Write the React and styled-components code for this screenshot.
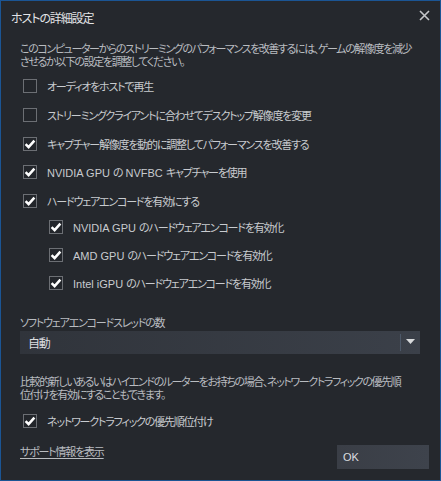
import React from "react";
import styled, { createGlobalStyle } from "styled-components";

const GlobalStyle = createGlobalStyle`
  html, body {
    margin: 0;
    padding: 0;
    background: #25282d;
  }
  * {
    box-sizing: border-box;
  }
`;

const font = `"Liberation Sans", "Noto Sans CJK JP", sans-serif`;

const Frame = styled.div`
  width: 441px;
  height: 481px;
  border: 1px solid #1b5594;
  background-color: #25282d;
  font-family: ${font};
  font-feature-settings: "palt";
  font-size: 11px;
  letter-spacing: -1.2px;
  color: #c3c6ca;
  display: flex;
  flex-direction: column;
  overflow: hidden;
`;

// ascii runs keep normal tracking, the kana/kanji get squeezed
const Latin = styled.span`
  letter-spacing: 0;
`;

const Jp = ({ children }) =>
  children
    .split(/([\x20-\x7e]+)/)
    .map((part, i) =>
      /^[\x20-\x7e]+$/.test(part) ? <Latin key={i}>{part}</Latin> : part
    );

const TitleBar = styled.div`
  height: 33px;
  display: flex;
  align-items: center;
  justify-content: space-between;
  padding: 0 9px 0 10px;
`;

const Title = styled.div`
  color: #e2e3e5;
  font-size: 12px;
  letter-spacing: -1.1px;
`;

const Close = styled.button`
  border: none;
  background: none;
  padding: 0;
  width: 14px;
  height: 14px;
  margin-top: -4px;
  display: flex;
  align-items: center;
  justify-content: center;
  cursor: pointer;
`;

const Body = styled.div`
  flex: 1;
  display: flex;
  flex-direction: column;
  padding: 9px 20px 0 19px;
`;

const Text = styled.p`
  margin: ${(p) => p.mt || "0"} 0 0 0;
  line-height: 13px;
  color: #b9bcc0;
  letter-spacing: -1.4px;
  white-space: nowrap;
`;

const Rows = styled.div`
  display: flex;
  flex-direction: column;
  margin-top: ${(p) => p.mt || "0"};
  padding-left: ${(p) => p.indent || "3px"};
`;

const Row = styled.label`
  height: ${(p) => p.h || "28.7px"};
  display: flex;
  align-items: center;
  gap: 10px;
  color: #c8cbcf;
  cursor: pointer;
`;

const Box = styled.span`
  width: 14px;
  height: 14px;
  flex: none;
  border: 1px solid #6c6f74;
  background-color: #23262b;
  display: flex;
  align-items: center;
  justify-content: center;
`;

const FieldLabel = styled.div`
  margin-top: 20px;
  line-height: 13px;
  color: #b9bcc0;
`;

const Select = styled.div`
  margin-top: 1px;
  height: 23px;
  display: flex;
  align-items: center;
  background: linear-gradient(90deg, #30343b 0%, #3b4049 100%);
  color: #dcdee0;
`;

const SelectValue = styled.div`
  flex: 1;
  padding-left: 8px;
  font-size: 12px;
`;

const Divider = styled.div`
  width: 1px;
  height: 17px;
  background-color: #4d5868;
`;

const Arrow = styled.div`
  width: 19px;
  display: flex;
  justify-content: center;
`;

const Footer = styled.div`
  margin-top: 9px;
  margin-right: -9px;
  display: flex;
  align-items: flex-start;
  justify-content: space-between;
`;

const Link = styled.a`
  margin-top: 1px;
  line-height: 13px;
  color: #b9bcc0;
  text-decoration: underline;
  text-underline-offset: 2px;
  cursor: pointer;
`;

const OkButton = styled.button`
  width: 92px;
  height: 24px;
  border: none;
  background: linear-gradient(90deg, #3a3e46 0%, #3e434c 100%);
  color: #dcdee0;
  font-family: ${font};
  font-size: 11px;
  text-align: left;
  padding: 0 6px;
  cursor: pointer;
`;

const Check = () => (
  <svg width="12" height="12" viewBox="0 0 12 12">
    <path
      d="M1.6 6.2 L4.6 9.2 L10.4 2.6"
      fill="none"
      stroke="#ffffff"
      strokeWidth="2.5"
    />
  </svg>
);

const Checkbox = ({ checked, label, h }) => (
  <Row h={h}>
    <Box>{checked && <Check />}</Box>
    <span>
      <Jp>{label}</Jp>
    </span>
  </Row>
);

export default function App() {
  return (
    <>
      <GlobalStyle />
      <Frame>
        <TitleBar>
          <Title>ホストの詳細設定</Title>
          <Close aria-label="close">
            <svg width="11" height="11" viewBox="0 0 11 11">
              <path d="M1 1 L10 10 M10 1 L1 10" stroke="#c4c6c9" strokeWidth="1.6" />
            </svg>
          </Close>
        </TitleBar>
        <Body>
          <Text>
            このコンピューターからのストリーミングのパフォーマンスを改善するには、ゲームの解像度を減少
            <br />
            させるか以下の設定を調整してください。
          </Text>
          <Rows mt="3px">
            <Checkbox label="オーディオをホストで再生" />
            <Checkbox label="ストリーミングクライアントに合わせてデスクトップ解像度を変更" />
            <Checkbox checked label="キャプチャー解像度を動的に調整してパフォーマンスを改善する" />
            <Checkbox checked label="NVIDIA GPU の NVFBC キャプチャーを使用" />
            <Checkbox checked label="ハードウェアエンコードを有効にする" />
          </Rows>
          <Rows mt="-2.5px" indent="29px">
            <Checkbox h="28px" checked label="NVIDIA GPU のハードウェアエンコードを有効化" />
            <Checkbox h="28px" checked label="AMD GPU のハードウェアエンコードを有効化" />
            <Checkbox h="28px" checked label="Intel iGPU のハードウェアエンコードを有効化" />
          </Rows>
          <FieldLabel>ソフトウェアエンコードスレッドの数</FieldLabel>
          <Select>
            <SelectValue>自動</SelectValue>
            <Divider />
            <Arrow>
              <svg width="9" height="6" viewBox="0 0 9 6">
                <path d="M0 0 H9 L4.5 5 Z" fill="#d8dadc" />
              </svg>
            </Arrow>
          </Select>
          <Text mt="22px">
            比較的新しいあるいはハイエンドのルーターをお持ちの場合、ネットワークトラフィックの優先順
            <br />
            位付けを有効にすることもできます。
          </Text>
          <Rows mt="5px">
            <Checkbox checked label="ネットワークトラフィックの優先順位付け" />
          </Rows>
          <Footer>
            <Link>サポート情報を表示</Link>
            <OkButton>OK</OkButton>
          </Footer>
        </Body>
      </Frame>
    </>
  );
}
